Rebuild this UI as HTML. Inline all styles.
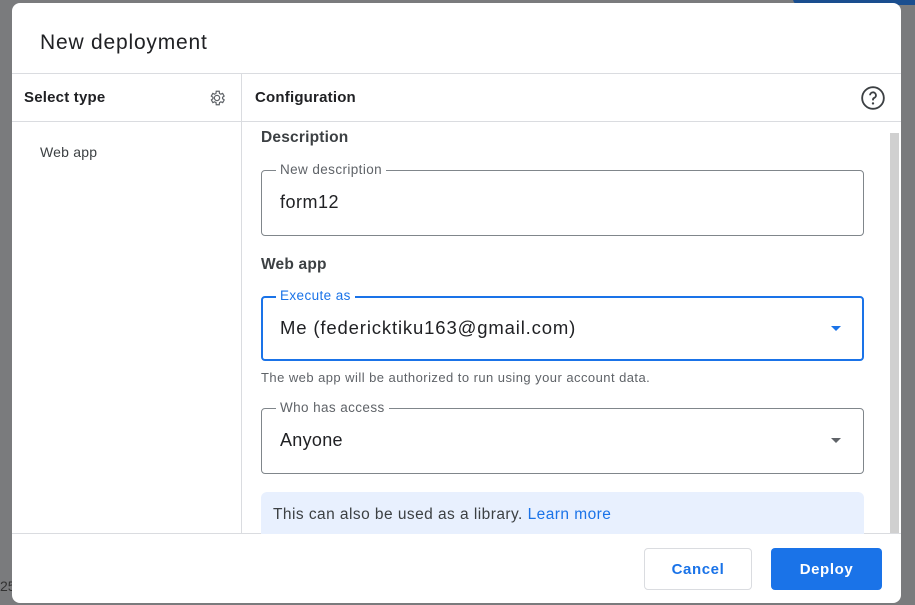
<!DOCTYPE html>
<html><head><style>
*{box-sizing:border-box;margin:0;padding:0}
body{width:915px;height:605px;background:#7a7b7d;position:relative;overflow:hidden;font-family:"Liberation Sans",Arial,sans-serif;color:#202124}
.topbtn{position:absolute;left:793px;top:-10px;width:130px;height:15px;background:#1a4e8f;border-radius:6px}
.dlg{position:absolute;left:12px;top:3px;width:889px;height:600px;background:#fff;border-radius:8px;overflow:hidden}
.t{position:absolute;white-space:nowrap}
.hl{position:absolute;background:#dadce0}
.field{position:absolute;left:249px;width:603px;border:1px solid #80868b;border-radius:4px}
.lab{position:absolute;left:14px;top:-9px;background:#fff;padding:0 4px;font-size:13.5px;color:#5f6368;letter-spacing:.4px}
.arrow{position:absolute;right:22px;width:0;height:0;border-left:5px solid transparent;border-right:5px solid transparent;border-top:5px solid #5f6368}
</style></head><body>
<div class="topbtn"></div>
<div class="t" style="left:0;top:578px;font-size:14px;color:#333">25</div>
<div class="dlg">
 <div class="t" style="left:28px;top:28px;font-size:21px;letter-spacing:.8px;color:#202124">New deployment</div>
 <div class="hl" style="left:0;top:70px;width:889px;height:1px"></div>
 <div class="hl" style="left:0;top:118px;width:889px;height:1px"></div>
 <div class="hl" style="left:229px;top:70px;width:1px;height:460px"></div>
 <div class="hl" style="left:0;top:530px;width:889px;height:1px"></div>
 <div class="t" style="left:12px;top:86px;font-size:15px;font-weight:bold;letter-spacing:.2px;color:#202124">Select type</div>
 <svg class="t" style="left:196px;top:86px" width="18" height="18" viewBox="0 0 24 24"><path d="M12 8.5a3.5 3.5 0 1 0 0 7 3.5 3.5 0 0 0 0-7zM19.4 13a7.6 7.6 0 0 0 0-2l2.1-1.6-2-3.5-2.5 1a7.5 7.5 0 0 0-1.7-1L15 3h-4l-.4 2.9a7.5 7.5 0 0 0-1.7 1l-2.5-1-2 3.5L6.6 11a7.6 7.6 0 0 0 0 2l-2.1 1.6 2 3.5 2.5-1a7.5 7.5 0 0 0 1.7 1L11 21h4l.4-2.9a7.5 7.5 0 0 0 1.7-1l2.5 1 2-3.5z" fill="none" stroke="#5f6368" stroke-width="1.6"/></svg>
 <div class="t" style="left:243px;top:86px;font-size:15px;font-weight:bold;letter-spacing:.2px">Configuration</div>
 <svg class="t" style="left:848px;top:82px" width="26" height="26" viewBox="0 0 24 24"><circle cx="12" cy="12" r="10" fill="none" stroke="#3c4043" stroke-width="1.7"/><path d="M9.3 9.5a2.7 2.7 0 1 1 3.7 2.5c-.7.3-1 .9-1 1.6v.6" fill="none" stroke="#3c4043" stroke-width="1.7"/><circle cx="12" cy="17" r="1.1" fill="#3c4043"/></svg>
 <div class="t" style="left:28px;top:141px;font-size:14px;letter-spacing:.2px;color:#3c4043">Web app</div>
 <div style="position:absolute;left:878px;top:130px;width:9px;height:400px;background:#d0d0d0"></div>
 <div class="t" style="left:249px;top:126px;font-size:15.5px;font-weight:bold;letter-spacing:.2px;color:#3c4043">Description</div>
 <div class="field" style="top:167px;height:66px"><div class="lab">New description</div><div class="t" style="left:18px;top:21px;font-size:18px;letter-spacing:.5px">form12</div></div>
 <div class="t" style="left:249px;top:253px;font-size:15.5px;font-weight:bold;letter-spacing:.2px;color:#3c4043">Web app</div>
 <div class="field" style="top:293px;height:65px;border:2px solid #1a73e8"><div class="lab" style="color:#1a73e8;top:-10px;left:13px">Execute as</div><div class="t" style="left:17px;top:19px;font-size:18.5px;letter-spacing:.85px">Me (federicktiku163@gmail.com)</div><div class="arrow" style="top:28px;border-top-color:#1a73e8;right:21px"></div></div>
 <div class="t" style="left:249px;top:367px;font-size:13px;letter-spacing:.45px;color:#5f6368">The web app will be authorized to run using your account data.</div>
 <div class="field" style="top:405px;height:66px"><div class="lab">Who has access</div><div class="t" style="left:18px;top:21px;font-size:18px;letter-spacing:.3px">Anyone</div><div class="arrow" style="top:29px"></div></div>
 <div style="position:absolute;left:249px;top:489px;width:603px;height:42px;background:#e8f0fe;border-radius:6px 6px 0 0"></div>
 <div class="t" style="left:261px;top:503px;font-size:15.5px;letter-spacing:.45px;color:#3c4043">This can also be used as a library. <span style="color:#1a73e8">Learn more</span></div>
 <div style="position:absolute;left:632px;top:545px;width:108px;height:42px;border:1px solid #dadce0;border-radius:4px;color:#1a73e8;font-size:15px;font-weight:bold;text-align:center;line-height:42px;letter-spacing:.6px">Cancel</div>
 <div style="position:absolute;left:759px;top:545px;width:111px;height:42px;background:#1a73e8;border-radius:4px;color:#fff;font-size:15px;font-weight:bold;text-align:center;line-height:44px;letter-spacing:.6px">Deploy</div>
</div>
</body></html>
